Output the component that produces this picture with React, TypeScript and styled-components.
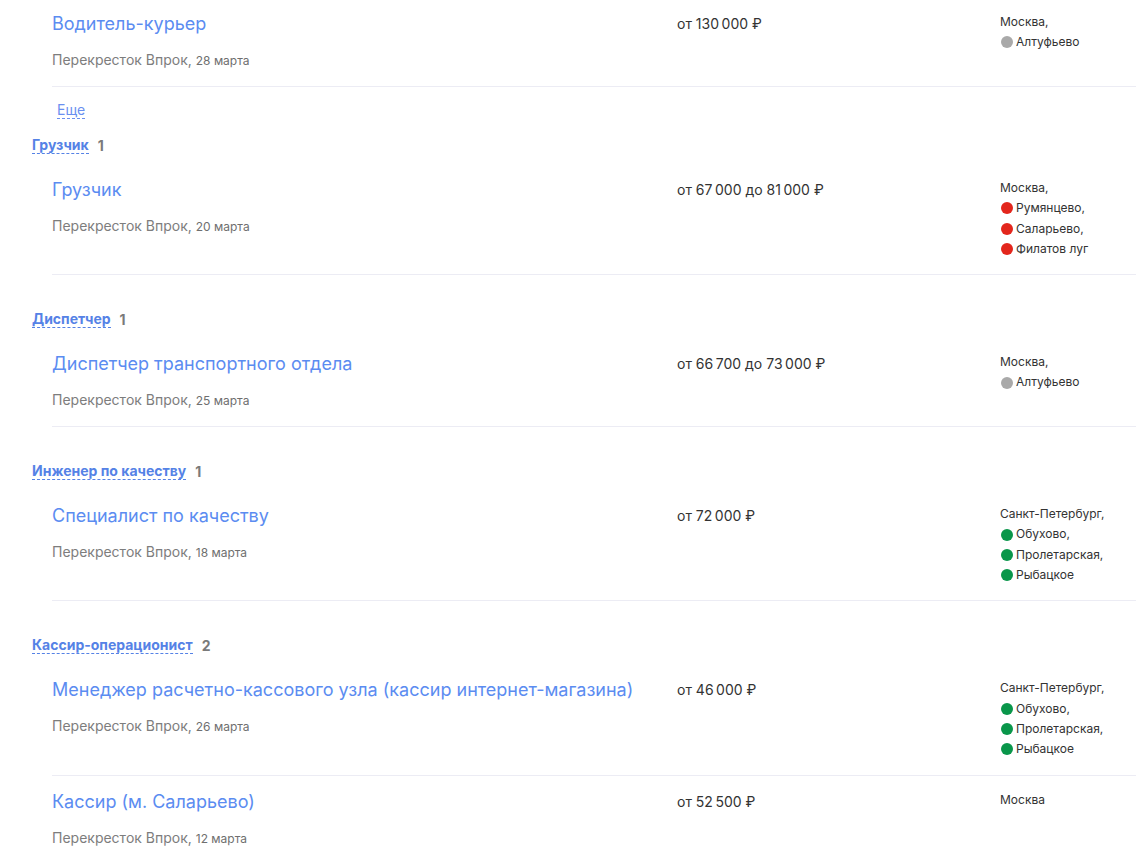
import React from 'react';
import styled, { createGlobalStyle } from 'styled-components';

const GlobalStyle = createGlobalStyle`
  body {
    margin: 0;
    background: #fff;
    font-family: Inter, "Noto Sans", Arial, sans-serif;
    overflow: hidden;
  }
`;

type Line = 'grey' | 'red' | 'green';

interface Vacancy {
  title: string;
  company: string;
  date: string;
  salary: string;
  city: string;
  metro: { name: string; line: Line }[];
}

interface Group {
  name?: string;
  count?: number;
  more?: boolean;
  items: Vacancy[];
}

const lineColors: Record<Line, string> = {
  grey: '#a9a9a9',
  red: '#e3261c',
  green: '#09964a'
};

const spb = [
  { name: 'Обухово', line: 'green' as Line },
  { name: 'Пролетарская', line: 'green' as Line },
  { name: 'Рыбацкое', line: 'green' as Line }
];

const groups: Group[] = [
  {
    more: true,
    items: [
      {
        title: 'Водитель-курьер',
        company: 'Перекресток Впрок',
        date: '28 марта',
        salary: 'от 130 000 ₽',
        city: 'Москва',
        metro: [{ name: 'Алтуфьево', line: 'grey' }]
      }
    ]
  },
  {
    name: 'Грузчик',
    count: 1,
    items: [
      {
        title: 'Грузчик',
        company: 'Перекресток Впрок',
        date: '20 марта',
        salary: 'от 67 000 до 81 000 ₽',
        city: 'Москва',
        metro: [
          { name: 'Румянцево', line: 'red' },
          { name: 'Саларьево', line: 'red' },
          { name: 'Филатов луг', line: 'red' }
        ]
      }
    ]
  },
  {
    name: 'Диспетчер',
    count: 1,
    items: [
      {
        title: 'Диспетчер транспортного отдела',
        company: 'Перекресток Впрок',
        date: '25 марта',
        salary: 'от 66 700 до 73 000 ₽',
        city: 'Москва',
        metro: [{ name: 'Алтуфьево', line: 'grey' }]
      }
    ]
  },
  {
    name: 'Инженер по качеству',
    count: 1,
    items: [
      {
        title: 'Специалист по качеству',
        company: 'Перекресток Впрок',
        date: '18 марта',
        salary: 'от 72 000 ₽',
        city: 'Санкт-Петербург',
        metro: spb
      }
    ]
  },
  {
    name: 'Кассир-операционист',
    count: 2,
    items: [
      {
        title: 'Менеджер расчетно-кассового узла (кассир интернет-магазина)',
        company: 'Перекресток Впрок',
        date: '26 марта',
        salary: 'от 46 000 ₽',
        city: 'Санкт-Петербург',
        metro: spb
      },
      {
        title: 'Кассир (м. Саларьево)',
        company: 'Перекресток Впрок',
        date: '12 марта',
        salary: 'от 52 500 ₽',
        city: 'Москва',
        metro: []
      }
    ]
  }
];

const Page = styled.div`
  margin-top: -2px;
  padding-left: 32px;
`;

const Section = styled.section<{ $tight?: boolean }>`
  display: flex;
  flex-direction: column;
  padding-top: ${p => (p.$tight ? '15px' : '34px')};

  &:first-child {
    padding-top: 0;
  }
`;

const Header = styled.div`
  display: flex;
  align-items: center;
  gap: 9px;
  height: 20px;
  margin-bottom: 9px;
  font-size: 14px;
  font-weight: 700;
`;

const HeaderLink = styled.a`
  color: #5582e6;
  line-height: 17px;
  border-bottom: 1px dashed #5582e6;
  cursor: pointer;
`;

const Count = styled.span`
  color: #7a7a7a;
  line-height: 17px;
`;

const Row = styled.div`
  display: grid;
  grid-template-columns: 605px 303px 1fr;
  column-gap: 20px;
  margin-left: 20px;
  padding: 14px 0 15px;
  border-bottom: 1px solid #ececf4;
`;

const Main = styled.div`
  display: flex;
  flex-direction: column;
  gap: 14px;
`;

const Title = styled.a`
  color: #5b8cf1;
  font-size: 18px;
  line-height: 24px;
  white-space: nowrap;
  cursor: pointer;
`;

const Company = styled.div`
  color: #7d7d7d;
  font-size: 14px;
  line-height: 20px;
`;

const DateText = styled.span`
  font-size: 12px;
  color: #6f6f6f;
`;

const Salary = styled.div`
  color: #333;
  font-size: 14px;
  line-height: 24px;
  white-space: nowrap;
`;

const Place = styled.div`
  display: flex;
  flex-direction: column;
  color: #333;
  font-size: 12px;
  line-height: 20.3px;
`;

const Station = styled.div`
  display: flex;
  align-items: center;
  gap: 3px;
`;

const Dot = styled.span<{ $color: string }>`
  width: 12px;
  height: 12px;
  border-radius: 50%;
  background: ${p => p.$color};
  margin-left: 1px;
`;

const More = styled.div`
  margin: 13px 0 0 25px;
  height: 20px;
  display: flex;
  align-items: center;
`;

const MoreLink = styled.a`
  color: #6a8ff0;
  font-size: 14px;
  line-height: 17px;
  border-bottom: 1px dashed #6a8ff0;
  cursor: pointer;
`;

const fmt = (s: string) => s.replace(/(\d) (\d)/g, '$1\u2009$2');

const VacancyRow = ({ v }: { v: Vacancy }) => (
  <Row>
    <Main>
      <Title>{v.title}</Title>
      <Company>
        {v.company}, <DateText>{v.date}</DateText>
      </Company>
    </Main>
    <Salary>{fmt(v.salary)}</Salary>
    <Place>
      <div>
        {v.city}
        {v.metro.length ? ',' : ''}
      </div>
      {v.metro.map((m, i) => (
        <Station key={m.name}>
          <Dot $color={lineColors[m.line]} />
          {m.name}
          {i < v.metro.length - 1 ? ',' : ''}
        </Station>
      ))}
    </Place>
  </Row>
);

export default function App() {
  return (
    <>
      <GlobalStyle />
      <Page>
        {groups.map((g, gi) => (
          <Section key={gi} $tight={gi > 0 && groups[gi - 1].more}>
            {g.name && (
              <Header>
                <HeaderLink>{g.name}</HeaderLink>
                <Count>{g.count}</Count>
              </Header>
            )}
            {g.items.map(v => (
              <VacancyRow key={v.title} v={v} />
            ))}
            {g.more && (
              <More>
                <MoreLink>Еще</MoreLink>
              </More>
            )}
          </Section>
        ))}
      </Page>
    </>
  );
}
